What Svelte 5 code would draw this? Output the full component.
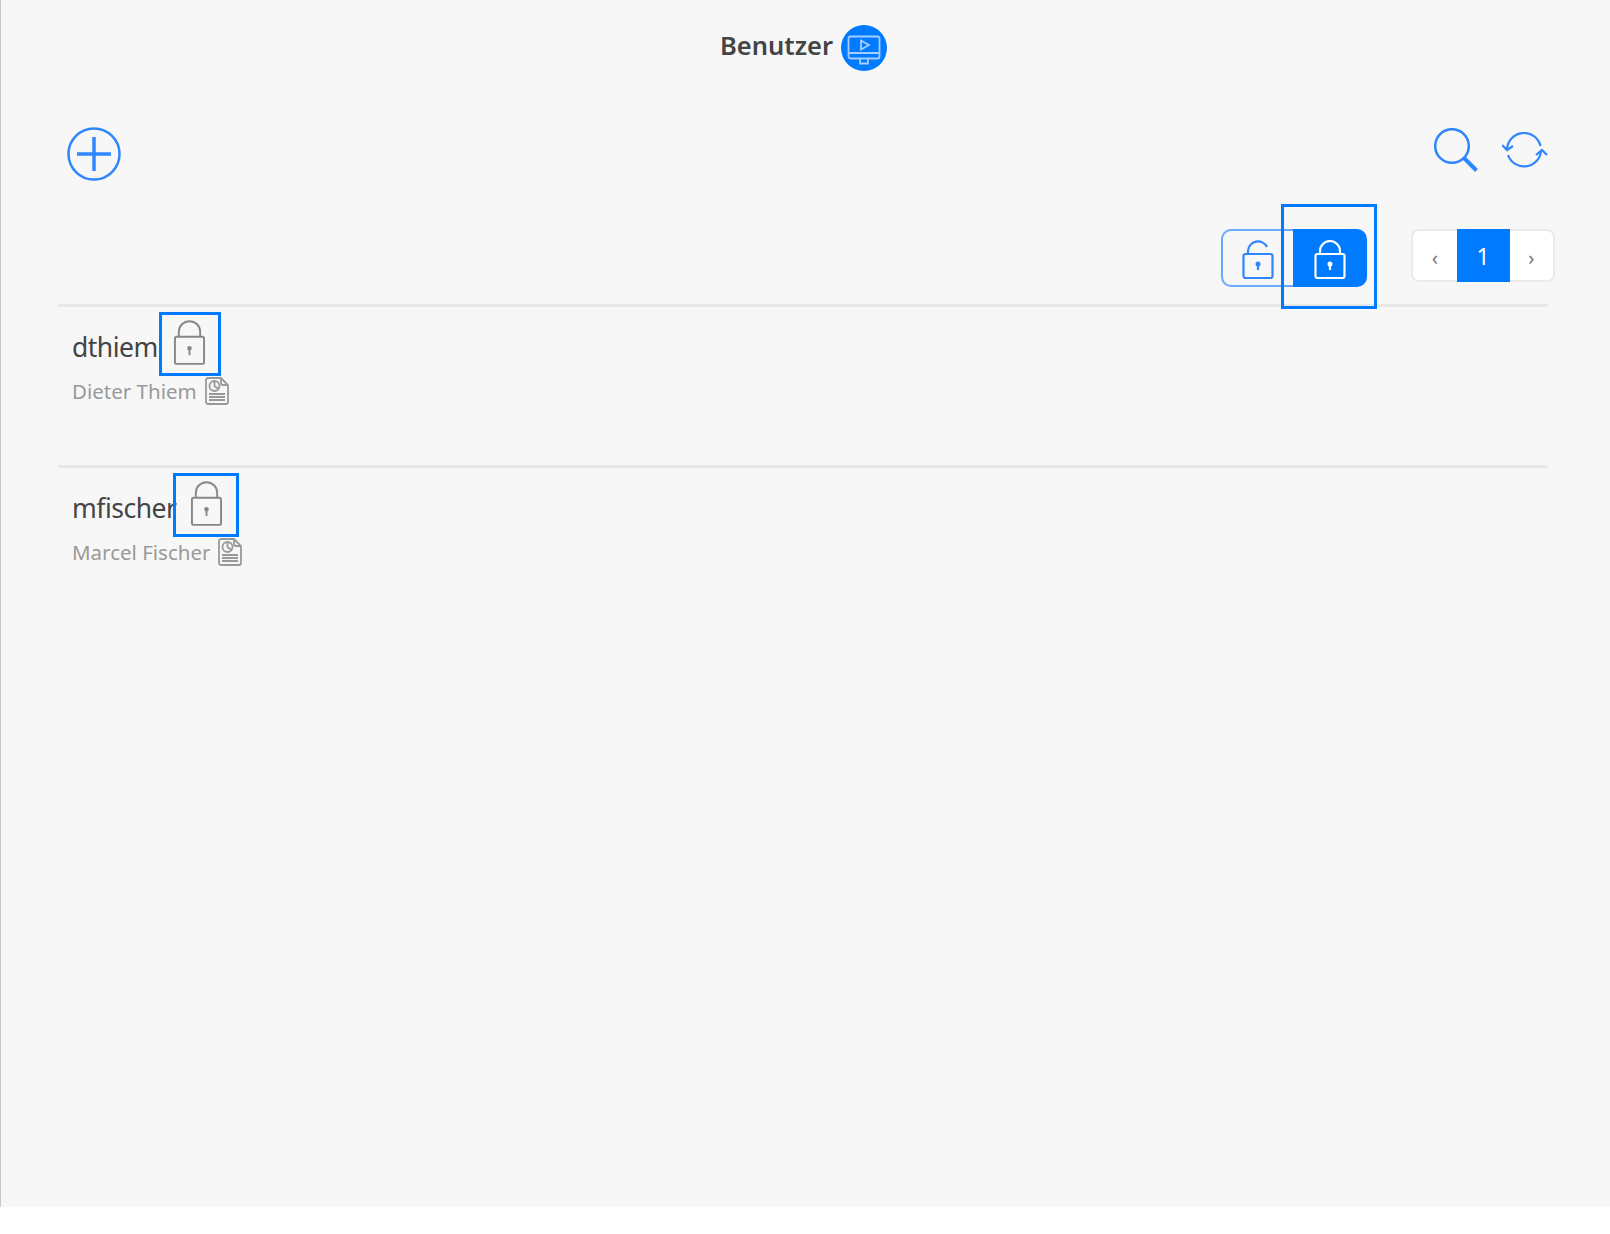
<script>
  const users = [
    { login: "dthiem", name: "Dieter Thiem", wide: false },
    { login: "mfischer", name: "Marcel Fischer", wide: true },
  ];
</script>

{#snippet rowLock()}
  <svg class="lock" viewBox="0 0 34 47" fill="none" stroke="currentColor" stroke-width="2">
    <rect x="2" y="17" width="30" height="28" rx="2" />
    <path d="M6 17v-5a11 11 0 0 1 22 0v5" />
    <circle cx="17" cy="29" r="1.4" fill="currentColor" />
    <path d="M17 30v6" />
  </svg>
{/snippet}

{#snippet toggleLock(open = false)}
  <svg class="lock" viewBox="0 0 32 39" fill="none" stroke="currentColor" stroke-width="2.200">
    <rect x="1.500" y="14" width="29" height="24" rx="2" />
    {#if open}
      <path d="M6 14v-3a10 10 0 0 1 19-4" />
    {:else}
      <path d="M6 14v-3a10 10 0 0 1 20 0v3" />
    {/if}
    <circle cx="16" cy="24" r="1.400" fill="currentColor" />
    <path d="M16 25v5" />
  </svg>
{/snippet}

<div class="page">
  <header class="title-row">
    <h1>Benutzer</h1>
    <span class="app-badge">
      <svg viewBox="0 0 46 46" fill="none" stroke="#a5cdff" stroke-width="1.800">
        <rect x="7.500" y="11.500" width="31" height="22" rx="2" />
        <path d="M8 28h30M19 34v4.500h8V34" />
        <path d="M20 15.500l8 4.500-8 4.500z" />
      </svg>
    </span>
  </header>

  <div class="toolbar">
    <button class="icon-btn" aria-label="Neu">
      <svg class="plus" viewBox="0 0 54 54" fill="none" stroke="#2f86ff">
        <circle cx="27" cy="27" r="25.500" stroke-width="2.500" />
        <path d="M27 10v34M10 27h34" stroke-width="3.500" />
      </svg>
    </button>
    <div class="tools-right">
      <button class="icon-btn" aria-label="Suchen">
        <svg class="search" viewBox="0 0 44 44" fill="none" stroke="#2f86ff">
          <circle cx="18" cy="18" r="16.800" stroke-width="2.500" />
          <path d="M30 30l12.500 12.500" stroke-width="4" />
        </svg>
      </button>
      <button class="icon-btn" aria-label="Aktualisieren">
        <svg class="refresh" viewBox="0 0 46 36" fill="none" stroke="#2f86ff" stroke-width="2.200">
          <path d="M5 17A17 17 0 0 1 38.500 14" />
          <path d="M6 23A17 17 0 0 0 39 19" />
          <path d="M0 13l5 5 6-4" />
          <path d="M34 23l6-5 5 5" />
        </svg>
      </button>
    </div>
  </div>

  <div class="filter-row">
    <div class="toggle">
      <button class="toggle-btn">{@render toggleLock(true)}</button>
      <button class="toggle-btn active">{@render toggleLock()}<span class="focus-ring"></span></button>
    </div>
    <nav class="pager">
      <span class="pager-arrow">‹</span>
      <span class="pager-current">1</span>
      <span class="pager-arrow">›</span>
    </nav>
  </div>

  <ul class="user-list">
    {#each users as user}
      <li class="user-row">
        <div class="user-line">
          <span class="login">{user.login}</span>
          <button class="lock-btn" class:wide={user.wide}>{@render rowLock()}</button>
        </div>
        <div class="user-sub">
          <span>{user.name}</span>
          <svg class="doc" viewBox="0 0 24 28" fill="none" stroke="#999" stroke-width="1.800">
            <path d="M3 1h13l7 7v17a2 2 0 0 1-2 2H3a2 2 0 0 1-2-2V3a2 2 0 0 1 2-2z" />
            <path d="M16 1v5a2 2 0 0 0 2 2h5" />
            <circle cx="9.500" cy="9" r="5" />
            <path d="M9.500 4v5l4 3" />
            <path d="M4 17h16M4 20h16M4 23h16" />
          </svg>
        </div>
      </li>
    {/each}
  </ul>
</div>

<style>
  :global(body) {
    background: #fff;
  }

  .page {
    box-sizing: border-box;
    height: 1207px;
    background: #f7f7f7;
    border-left: 1px solid #c9c9c9;
    font-family: "Noto Sans", "Open Sans", sans-serif;
    color: #444;
  }

  button {
    padding: 0;
    border: 0;
    background: none;
    font: inherit;
    color: inherit;
  }

  .title-row {
    height: 95px;
    padding-right: 4px;
    display: flex;
    align-items: center;
    justify-content: center;
    gap: 8px;
  }

  h1 {
    margin: 0 0 6px;
    font-size: 25.500px;
    font-weight: 600;
    color: #444;
  }

  .app-badge {
    width: 46px;
    height: 46px;
    border-radius: 50%;
    background: #007aff;
    display: block;
  }

  .app-badge svg {
    display: block;
  }

  .toolbar {
    margin-top: 32px;
    padding: 0 62px 0 66px;
    display: flex;
    justify-content: space-between;
    align-items: flex-start;
  }

  .icon-btn {
    display: block;
  }

  .icon-btn svg {
    display: block;
  }

  .plus {
    width: 54px;
    height: 54px;
  }

  .tools-right {
    display: flex;
    align-items: center;
    gap: 24px;
    margin-top: 1px;
  }

  .search {
    width: 44px;
    height: 44px;
  }

  .refresh {
    width: 46px;
    height: 36px;
  }

  .filter-row {
    margin-top: 48px;
    padding-right: 55px;
    display: flex;
    justify-content: flex-end;
    align-items: flex-start;
    gap: 44px;
  }

  .toggle {
    display: flex;
    width: 146px;
    height: 58px;
  }

  .toggle-btn {
    position: relative;
    box-sizing: border-box;
    display: flex;
    align-items: center;
    justify-content: center;
    width: 72px;
    color: #2f86ff;
    border: 2px solid #66a9ff;
    border-right: 0;
    border-radius: 10px 0 0 10px;
  }

  .toggle-btn.active {
    width: 74px;
    color: #fff;
    background: #007aff;
    border: 0;
    border-radius: 0 10px 10px 0;
  }

  .toggle-btn .lock {
    width: 32px;
    height: 39px;
    margin-bottom: -3px;
  }

  .focus-ring {
    position: absolute;
    inset: -25px -10px -22px -12px;
    border: 3px solid #007aff;
  }

  .pager {
    box-sizing: border-box;
    width: 144px;
    height: 53px;
    display: grid;
    grid-template-columns: 1fr 53px 1fr;
    background: #fff;
    border: 2px solid #ebebeb;
    border-radius: 8px;
  }

  .pager-arrow {
    display: flex;
    align-items: center;
    justify-content: center;
    padding-top: 4px;
    font-size: 20px;
    color: #777;
  }

  .pager-current {
    margin: -2px 0;
    display: flex;
    align-items: center;
    justify-content: center;
    font-size: 23px;
    color: #fff;
    background: #007aff;
  }

  .user-list {
    list-style: none;
    margin: 17px 62px 0 57px;
    padding: 0;
  }

  .user-row {
    box-sizing: border-box;
    height: 161px;
    padding: 5px 0 0 14px;
    border-top: 3px solid #e8e8e8;
  }

  .user-line {
    display: flex;
    align-items: center;
    height: 64px;
  }

  .login {
    padding-top: 6px;
    font-size: 26.500px;
    letter-spacing: -0.500px;
    color: #444;
  }

  .lock-btn {
    box-sizing: border-box;
    width: 62px;
    height: 64px;
    margin-left: 1px;
    display: flex;
    align-items: center;
    justify-content: center;
    color: #888;
    border: 3px solid #007aff;
  }

  .lock-btn.wide {
    width: 66px;
    margin-left: -3px;
  }

  .lock-btn .lock {
    width: 33px;
    height: 46px;
    margin-bottom: 3px;
  }

  .user-sub {
    margin-top: 1px;
    display: flex;
    align-items: center;
    gap: 8px;
    font-size: 20.500px;
    color: #999;
  }

  .doc {
    width: 24px;
    height: 28px;
  }
</style>
